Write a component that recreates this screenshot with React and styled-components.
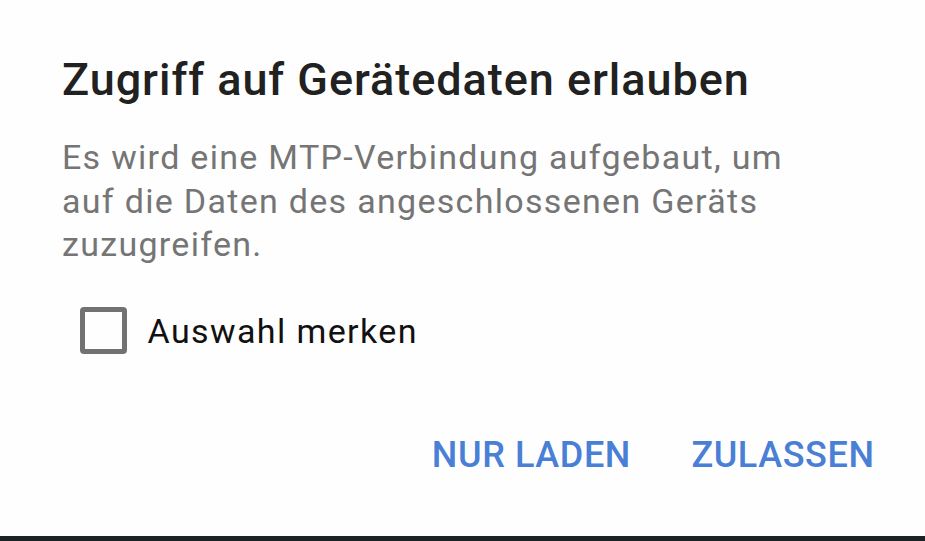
import React from "react";
import styled, { createGlobalStyle } from "styled-components";

const Global = createGlobalStyle`
  html, body { margin: 0; padding: 0; background: #1a2226; }
  body { font-family: Roboto, "Noto Sans", Arial, sans-serif; }
`;

const Screen = styled.div`
  width: 925px;
  height: 541px;
  display: flex;
  flex-direction: column;
  background: #1a2226;
`;

const Dialog = styled.div`
  height: 536px;
  flex: none;
  background: #fefefe;
  box-sizing: border-box;
  padding: 54px 0 0 62px;
  display: flex;
  flex-direction: column;
`;

const Title = styled.h1`
  margin: 0;
  font-size: 45px;
  line-height: 52px;
  font-weight: 500;
  color: #212121;
  letter-spacing: 0.95px;
  white-space: nowrap;
`;

const Body = styled.p`
  margin: 30px 0 0;
  font-size: 34px;
  line-height: 43.5px;
  font-weight: 400;
  color: #757575;
  letter-spacing: 1.3px;
  max-width: 762px;
`;

const CheckRow = styled.label`
  display: flex;
  align-items: center;
  gap: 21px;
  margin: 40.5px 0 0 17.5px;
`;

const Box = styled.span`
  flex: none;
  width: 47px;
  height: 47px;
  box-sizing: border-box;
  border: 5.5px solid #727272;
  border-radius: 4px;
`;

const Label = styled.span`
  font-size: 34px;
  line-height: 40px;
  color: #111111;
  letter-spacing: 1.4px;
`;

const Actions = styled.div`
  margin-top: auto;
  margin-bottom: 59px;
  padding-right: 51px;
  display: flex;
  justify-content: flex-end;
  gap: 61px;
`;

const Button = styled.span`
  font-size: 36px;
  line-height: 44px;
  font-weight: 500;
  color: #4a7fd6;
  letter-spacing: 0.6px;
  margin-right: -0.6px;
`;

export default function App() {
  return (
    <>
      <Global />
      <Screen>
        <Dialog>
          <Title>Zugriff auf Gerätedaten erlauben</Title>
          <Body>
            Es wird eine MTP-Verbindung aufgebaut, um auf die Daten des angeschlossenen Geräts zuzugreifen.
          </Body>
          <CheckRow>
            <Box />
            <Label>Auswahl merken</Label>
          </CheckRow>
          <Actions>
            <Button>NUR LADEN</Button>
            <Button>ZULASSEN</Button>
          </Actions>
        </Dialog>
      </Screen>
    </>
  );
}
